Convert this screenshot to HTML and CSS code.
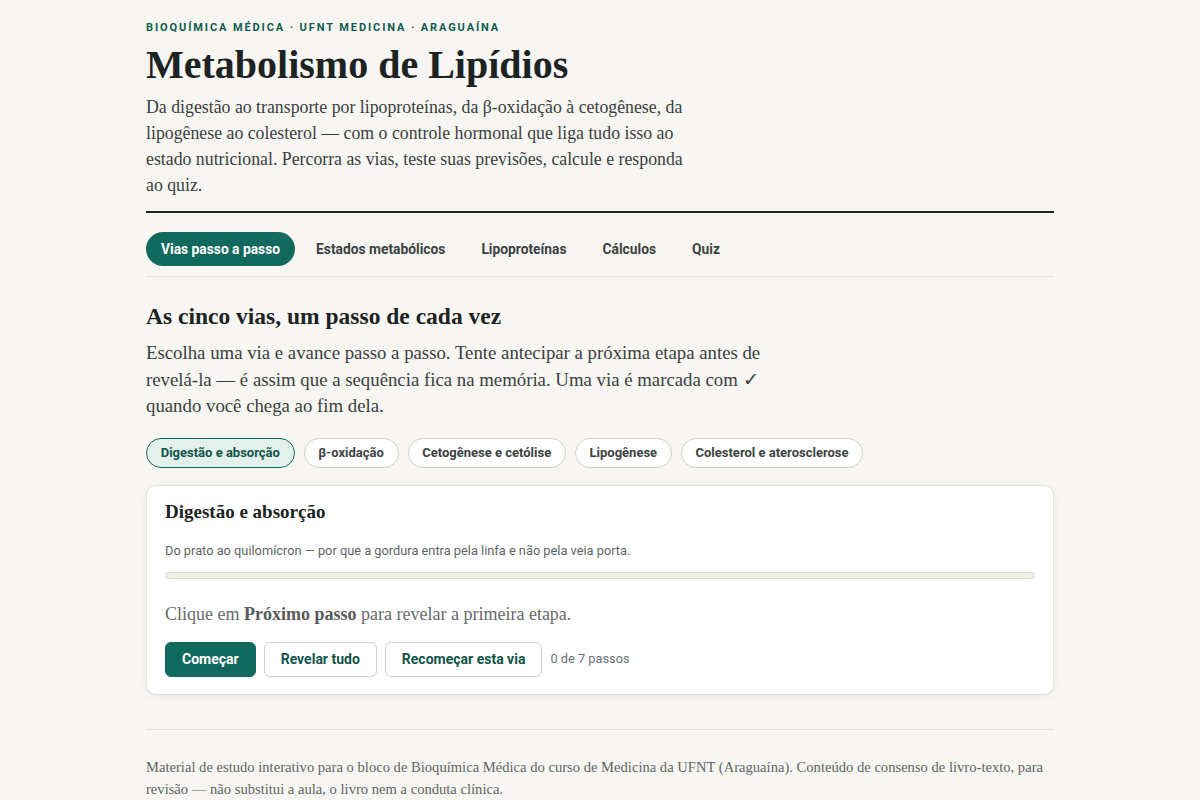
FILE: index.html
```html
<!DOCTYPE html>
<html lang="pt-BR">
<head>
    <meta charset="UTF-8">
    <meta name="viewport" content="width=device-width, initial-scale=1.0">
    <title>Metabolismo de Lipídios - Bioquímica Médica</title>
    <link rel="stylesheet" href="styles.css">
</head>
<body>

    <div class="page">
        <!-- Cabeçalho -->
        <header class="masthead">
            <p class="eyebrow">Bioquímica Médica · UFNT Medicina · Araguaína</p>
            <h1>Metabolismo de Lipídios</h1>
            <p class="lead">Da digestão ao transporte por lipoproteínas, da β-oxidação à cetogênese, da lipogênese ao colesterol — com o controle hormonal que liga tudo isso ao estado nutricional. Percorra as vias, teste suas previsões, calcule e responda ao quiz.</p>
        </header>

        <!-- Abas principais -->
        <nav class="tabs">
            <button class="tab active">Vias passo a passo</button>
            <button class="tab">Estados metabólicos</button>
            <button class="tab">Lipoproteínas</button>
            <button class="tab">Cálculos</button>
            <button class="tab">Quiz</button>
        </nav>

        <section class="panel">
            <h2>As cinco vias, um passo de cada vez</h2>
            <p class="intro">Escolha uma via e avance passo a passo. Tente antecipar a próxima etapa antes de revelá-la — é assim que a sequência fica na memória. Uma via é marcada com ✓ quando você chega ao fim dela.</p>

            <div class="chips">
                <button class="chip active">Digestão e absorção</button>
                <button class="chip">β-oxidação</button>
                <button class="chip">Cetogênese e cetólise</button>
                <button class="chip">Lipogênese</button>
                <button class="chip">Colesterol e aterosclerose</button>
            </div>

            <div class="card">
                <h3>Digestão e absorção</h3>
                <p class="card-sub">Do prato ao quilomícron — por que a gordura entra pela linfa e não pela veia porta.</p>
                <div class="progress"><div class="progress-fill" style="width: 0%"></div></div>
                <p class="hint">Clique em <strong>Próximo passo</strong> para revelar a primeira etapa.</p>
                <div class="controls">
                    <button class="btn primary">Começar</button>
                    <button class="btn">Revelar tudo</button>
                    <button class="btn">Recomeçar esta via</button>
                    <span class="count">0 de 7 passos</span>
                </div>
            </div>
        </section>

        <footer class="foot">
            <p>Material de estudo interativo para o bloco de Bioquímica Médica do curso de Medicina da UFNT (Araguaína). Conteúdo de consenso de livro-texto, para revisão — não substitui a aula, o livro nem a conduta clínica.</p>
        </footer>
    </div>

</body>
</html>
```

FILE: styles.css
```css
body {
    font-family: 'Liberation Serif', 'DejaVu Serif', serif;
    background-color: #f7f6f2;
    color: #1f2626;
    margin: 0;
    padding: 0;
}
.page {
    max-width: 908px;
    margin: 0 auto;
    padding: 20px 0 0;
}
.masthead {
    padding-bottom: 13px;
    border-bottom: 2px solid #1f2424;
}
.eyebrow {
    font-family: 'Roboto', sans-serif;
    font-size: 11px;
    font-weight: 700;
    letter-spacing: 1.9px;
    text-transform: uppercase;
    color: #0f5c50;
    margin: 0;
    line-height: 16px;
}
h1 {
    font-size: 40px;
    line-height: 46px;
    margin: 6px 0 6px;
    color: #1d2323;
}
.lead {
    font-size: 17.8px;
    line-height: 26px;
    color: #3a403f;
    max-width: 548px;
    margin: 0;
}
.tabs {
    display: flex;
    gap: 6px;
    padding: 19px 0 10px;
    border-bottom: 1px solid #e2e0da;
}
.tab {
    font-family: 'Roboto', sans-serif;
    font-size: 13.8px;
    font-weight: 700;
    color: #3c4242;
    background: none;
    border: none;
    border-radius: 17px;
    height: 34px;
    padding: 0 15px;
    cursor: pointer;
}
.tab.active {
    background-color: #126a5e;
    color: white;
}
.panel h2 {
    font-size: 23.5px;
    line-height: 28px;
    margin: 25px 0 10px;
    color: #1d2323;
}
.intro {
    font-size: 18.8px;
    line-height: 26.5px;
    color: #3a403f;
    max-width: 625px;
    margin: 0 0 18px;
}
.chips {
    display: flex;
    gap: 9px;
    margin-bottom: 17px;
}
.chip {
    font-family: 'Roboto', sans-serif;
    font-size: 13px;
    font-weight: 700;
    color: #3c4242;
    background-color: white;
    border: 1px solid #d3cfc5;
    border-radius: 15px;
    height: 30px;
    padding: 0 13.7px;
    cursor: pointer;
}
.chip.active {
    background-color: #e4f0ec;
    border-color: #126a5e;
    color: #0f5449;
}
.card {
    background-color: white;
    border: 1px solid #e4e1d9;
    border-radius: 10px;
    box-shadow: 0 2px 6px rgba(0, 0, 0, 0.06);
    padding: 14px 18px 17px;
}
.card h3 {
    font-size: 19px;
    line-height: 24px;
    margin: 0 0 19px;
    color: #1d2323;
}
.card-sub {
    font-family: 'Roboto', sans-serif;
    font-size: 12.8px;
    color: #5f6565;
    margin: 0 0 14px;
}
.progress {
    height: 5px;
    background-color: #eeede7;
    border: 1px solid #dcdad2;
    border-radius: 4px;
    overflow: hidden;
}
.progress-fill {
    height: 100%;
    background-color: #126a5e;
}
.hint {
    font-size: 18px;
    color: #666b6b;
    margin: 25px 0 17px;
}
.hint strong {
    color: #555a5a;
}
.controls {
    display: flex;
    align-items: center;
    gap: 8px;
}
.btn {
    font-family: 'Roboto', sans-serif;
    font-size: 14px;
    font-weight: 700;
    color: #0f5449;
    background-color: white;
    border: 1px solid #d3cfc5;
    border-radius: 6px;
    height: 35px;
    padding: 0 16px;
    cursor: pointer;
}
.btn.primary {
    background-color: #126a5e;
    border-color: #126a5e;
    color: white;
}
.count {
    font-family: 'Roboto', sans-serif;
    font-size: 12.8px;
    color: #6a7070;
    margin-top: -2px;
}
.foot {
    margin-top: 34px;
    border-top: 1px solid #e2e0da;
    padding-top: 26px;
}
.foot p {
    font-size: 14.6px;
    line-height: 22px;
    color: #5f6565;
    margin: 0;
}
```
